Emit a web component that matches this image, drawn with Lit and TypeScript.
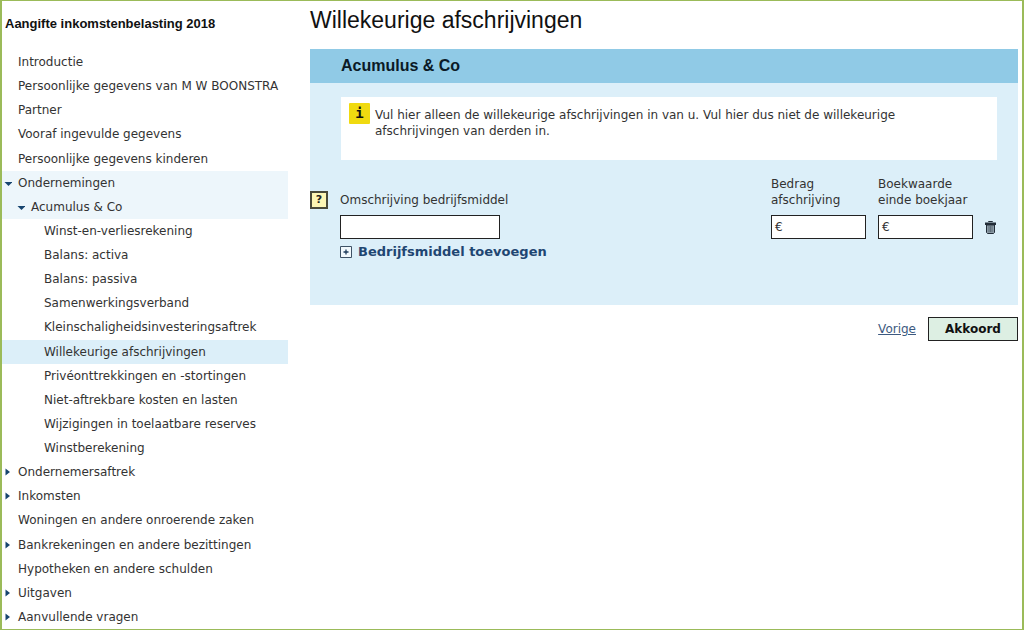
import { LitElement, html, css, svg, nothing } from "lit";
import { customElement } from "lit/decorators.js";
import { classMap } from "lit/directives/class-map.js";

interface NavItem {
  label: string;
  level?: 1 | 2 | 3;
  arrow?: "open" | "closed";
  tone?: "trail" | "current";
}

const NAV: NavItem[] = [
  { label: "Introductie" },
  { label: "Persoonlijke gegevens van M W BOONSTRA" },
  { label: "Partner" },
  { label: "Vooraf ingevulde gegevens" },
  { label: "Persoonlijke gegevens kinderen" },
  { label: "Ondernemingen", arrow: "open", tone: "trail" },
  { label: "Acumulus & Co", level: 2, arrow: "open", tone: "trail" },
  { label: "Winst-en-verliesrekening", level: 3 },
  { label: "Balans: activa", level: 3 },
  { label: "Balans: passiva", level: 3 },
  { label: "Samenwerkingsverband", level: 3 },
  { label: "Kleinschaligheidsinvesteringsaftrek", level: 3 },
  { label: "Willekeurige afschrijvingen", level: 3, tone: "current" },
  { label: "Privéonttrekkingen en -stortingen", level: 3 },
  { label: "Niet-aftrekbare kosten en lasten", level: 3 },
  { label: "Wijzigingen in toelaatbare reserves", level: 3 },
  { label: "Winstberekening", level: 3 },
  { label: "Ondernemersaftrek", arrow: "closed" },
  { label: "Inkomsten", arrow: "closed" },
  { label: "Woningen en andere onroerende zaken" },
  { label: "Bankrekeningen en andere bezittingen", arrow: "closed" },
  { label: "Hypotheken en andere schulden" },
  { label: "Uitgaven", arrow: "closed" },
  { label: "Aanvullende vragen", arrow: "closed" },
];

@customElement("tax-nav")
export class TaxNav extends LitElement {
  static styles = css`
    :host {
      display: flex;
      flex-direction: column;
    }
    .title {
      margin: 0;
      padding: 14px 0 18px 3px;
      font: bold 13px/17px "Liberation Sans", Arial, sans-serif;
      color: #111;
    }
    .list {
      flex: 1;
      display: flex;
      flex-direction: column;
      margin: 0;
      padding: 0;
      list-style: none;
    }
    .item {
      flex: 1;
      display: flex;
    }
    .link {
      flex: 1;
      display: flex;
      align-items: center;
      padding-left: 2px;
      color: #333;
      line-height: 24px;
      text-decoration: none;
      white-space: nowrap;
    }
    .level2 {
      padding-left: 15px;
    }
    .level3 {
      padding-left: 28px;
    }
    .trail {
      background: #edf6fb;
    }
    .current {
      background: #dceff9;
    }
    .arrow {
      flex: none;
      width: 8px;
      height: 8px;
      margin-right: 6px;
      fill: #17456f;
    }
    .arrow.empty {
      visibility: hidden;
    }
  `;

  private arrow(kind?: "open" | "closed") {
    return html`<svg class=${classMap({ arrow: true, empty: !kind })} viewBox="0 0 8 8" aria-hidden="true">
      ${kind === "open" ? svg`<path d="M.5 3h8L4.500 7z" />` : kind === "closed" ? svg`<path d="M1.500 .5 6 4 1.500 7.500z" />` : nothing}
    </svg>`;
  }

  render() {
    return html`
      <h2 class="title">Aangifte inkomstenbelasting 2018</h2>
      <ul class="list">
        ${NAV.map(
          (n) => html`<li class="item">
            <a
              href="#"
              class=${classMap({
                link: true,
                level2: n.level === 2,
                level3: n.level === 3,
                trail: n.tone === "trail",
                current: n.tone === "current",
              })}
              aria-current=${n.tone === "current" ? "page" : nothing}
              >${this.arrow(n.arrow)}<span>${n.label}</span></a
            >
          </li>`
        )}
      </ul>
    `;
  }
}

@customElement("app-root")
export class AppRoot extends LitElement {
  static styles = css`
    :host {
      display: block;
      font: 12px/16px "DejaVu Sans", Verdana, sans-serif;
      color: #333;
    }
    * {
      box-sizing: border-box;
    }
    .page {
      display: grid;
      grid-template-columns: 286px minmax(0, 1fr);
      column-gap: 22px;
      min-height: 100vh;
      padding-right: 4px;
      border: 1px solid #9bbb59;
      border-width: 1px 2px 1px 2px;
      background: #fff;
    }
    .heading {
      margin: 0;
      padding: 5px 0 14px;
      font: 23px/29px "Liberation Sans", Arial, sans-serif;
      color: #111;
    }
    .bar {
      margin: 0;
      padding: 0 31px;
      background: #90cae6;
      font: bold 16px/34px "Liberation Sans", Arial, sans-serif;
      color: #0b1a26;
    }
    .body {
      padding: 14px 21px 45px 0;
      background: #dceff9;
    }
    .note {
      display: flex;
      align-items: flex-start;
      gap: 5px;
      margin-left: 31px;
      padding: 6px 8px 21px;
      background: #fff;
    }
    .info {
      flex: none;
      width: 21px;
      border-radius: 1px;
      background: #f0da10;
      font: bold 14px/21px "DejaVu Sans Mono", monospace;
      color: #111;
      text-align: center;
    }
    .text {
      max-width: 540px;
      margin: 0;
      padding-top: 4px;
    }
    .row {
      display: flex;
      align-items: flex-end;
      padding-top: 16px;
    }
    .help {
      width: 18px;
      height: 18px;
      margin: 0 12px 30px 0;
      padding: 0;
      border: 2px solid #4a4a3a;
      background: #fdf6b4;
      font: bold 11px/14px "DejaVu Sans", Verdana, sans-serif;
      color: #222;
    }
    .field {
      display: flex;
      flex-direction: column;
      gap: 7px;
      width: 95px;
    }
    .wide {
      width: 160px;
      margin-right: auto;
      white-space: nowrap;
    }
    .amount {
      margin-right: 12px;
    }
    .box {
      display: flex;
      align-items: center;
      height: 24px;
      padding-left: 3px;
      border: 1px solid #222;
      background: #fff;
    }
    .input {
      flex: 1;
      min-width: 0;
      height: 20px;
      padding: 0 4px;
      border: 0;
      outline: 0;
      background: transparent;
      font: inherit;
      color: inherit;
    }
    .trash {
      display: flex;
      height: 24px;
      align-items: center;
      padding: 0 1px 0 0;
      border: 0;
      background: none;
    }
    .add {
      display: flex;
      align-items: center;
      gap: 6px;
      margin: 5px 0 0 30px;
      padding: 0;
      border: 0;
      background: none;
      font: bold 13px/16px "DejaVu Sans", Verdana, sans-serif;
      color: #1f4672;
    }
    .actions {
      display: flex;
      justify-content: flex-end;
      align-items: center;
      gap: 12px;
      padding-top: 12px;
    }
    .back {
      color: #3d5a80;
    }
    .ok {
      width: 90px;
      height: 24px;
      padding: 0;
      border: 1px solid #222;
      background: #ddefe3;
      font: bold 12px/16px "DejaVu Sans", Verdana, sans-serif;
      color: #111;
    }
  `;

  render() {
    return html`
      <div class="page">
        <tax-nav></tax-nav>
        <main>
          <h1 class="heading">Willekeurige afschrijvingen</h1>
          <h2 class="bar">Acumulus &amp; Co</h2>
          <section class="body">
            <div class="note">
              <span class="info">i</span>
              <p class="text">
                Vul hier alleen de willekeurige afschrijvingen in van u. Vul hier dus niet de willekeurige
                afschrijvingen van derden in.
              </p>
            </div>
            <div class="row">
              <button class="help" aria-label="Help">?</button>
              <div class="field wide">
                <label for="desc">Omschrijving bedrijfsmiddel</label>
                <div class="box"><input class="input" id="desc" type="text" /></div>
              </div>
              <div class="field amount">
                <label for="amount">Bedrag afschrijving</label>
                <div class="box"><span>€</span><input class="input" id="amount" type="text" /></div>
              </div>
              <div class="field amount">
                <label for="value">Boekwaarde einde boekjaar</label>
                <div class="box"><span>€</span><input class="input" id="value" type="text" /></div>
              </div>
              <button class="trash" aria-label="Verwijderen">
                <svg width="11" height="13" viewBox="0 0 11 13" aria-hidden="true">
                  <path d="M3.500 1V.5h4V1" fill="none" stroke="#222d38" />
                  <path d="M0 1.500h11v2.500H0z" fill="#222d38" />
                  <path d="M1.500 4h8v7.500l-1 1h-6l-1-1z" fill="#8b9aa5" stroke="#222d38" />
                  <path d="M4 5v6M5.500 5v6M7 5v6" stroke="#43515d" stroke-width=".6" />
                </svg>
              </button>
            </div>
            <button class="add">
              <svg width="12" height="12" viewBox="0 0 12 12" aria-hidden="true">
                <path d="M.5.5h11v11H.5z" fill="#f2f9fd" stroke="#3f5266" />
                <path d="M6 3.500v5M3.500 6h5" stroke="#1f3c5c" stroke-width="1.3" />
              </svg>
              Bedrijfsmiddel toevoegen
            </button>
          </section>
          <div class="actions">
            <a class="back" href="#">Vorige</a>
            <button class="ok">Akkoord</button>
          </div>
        </main>
      </div>
    `;
  }
}
